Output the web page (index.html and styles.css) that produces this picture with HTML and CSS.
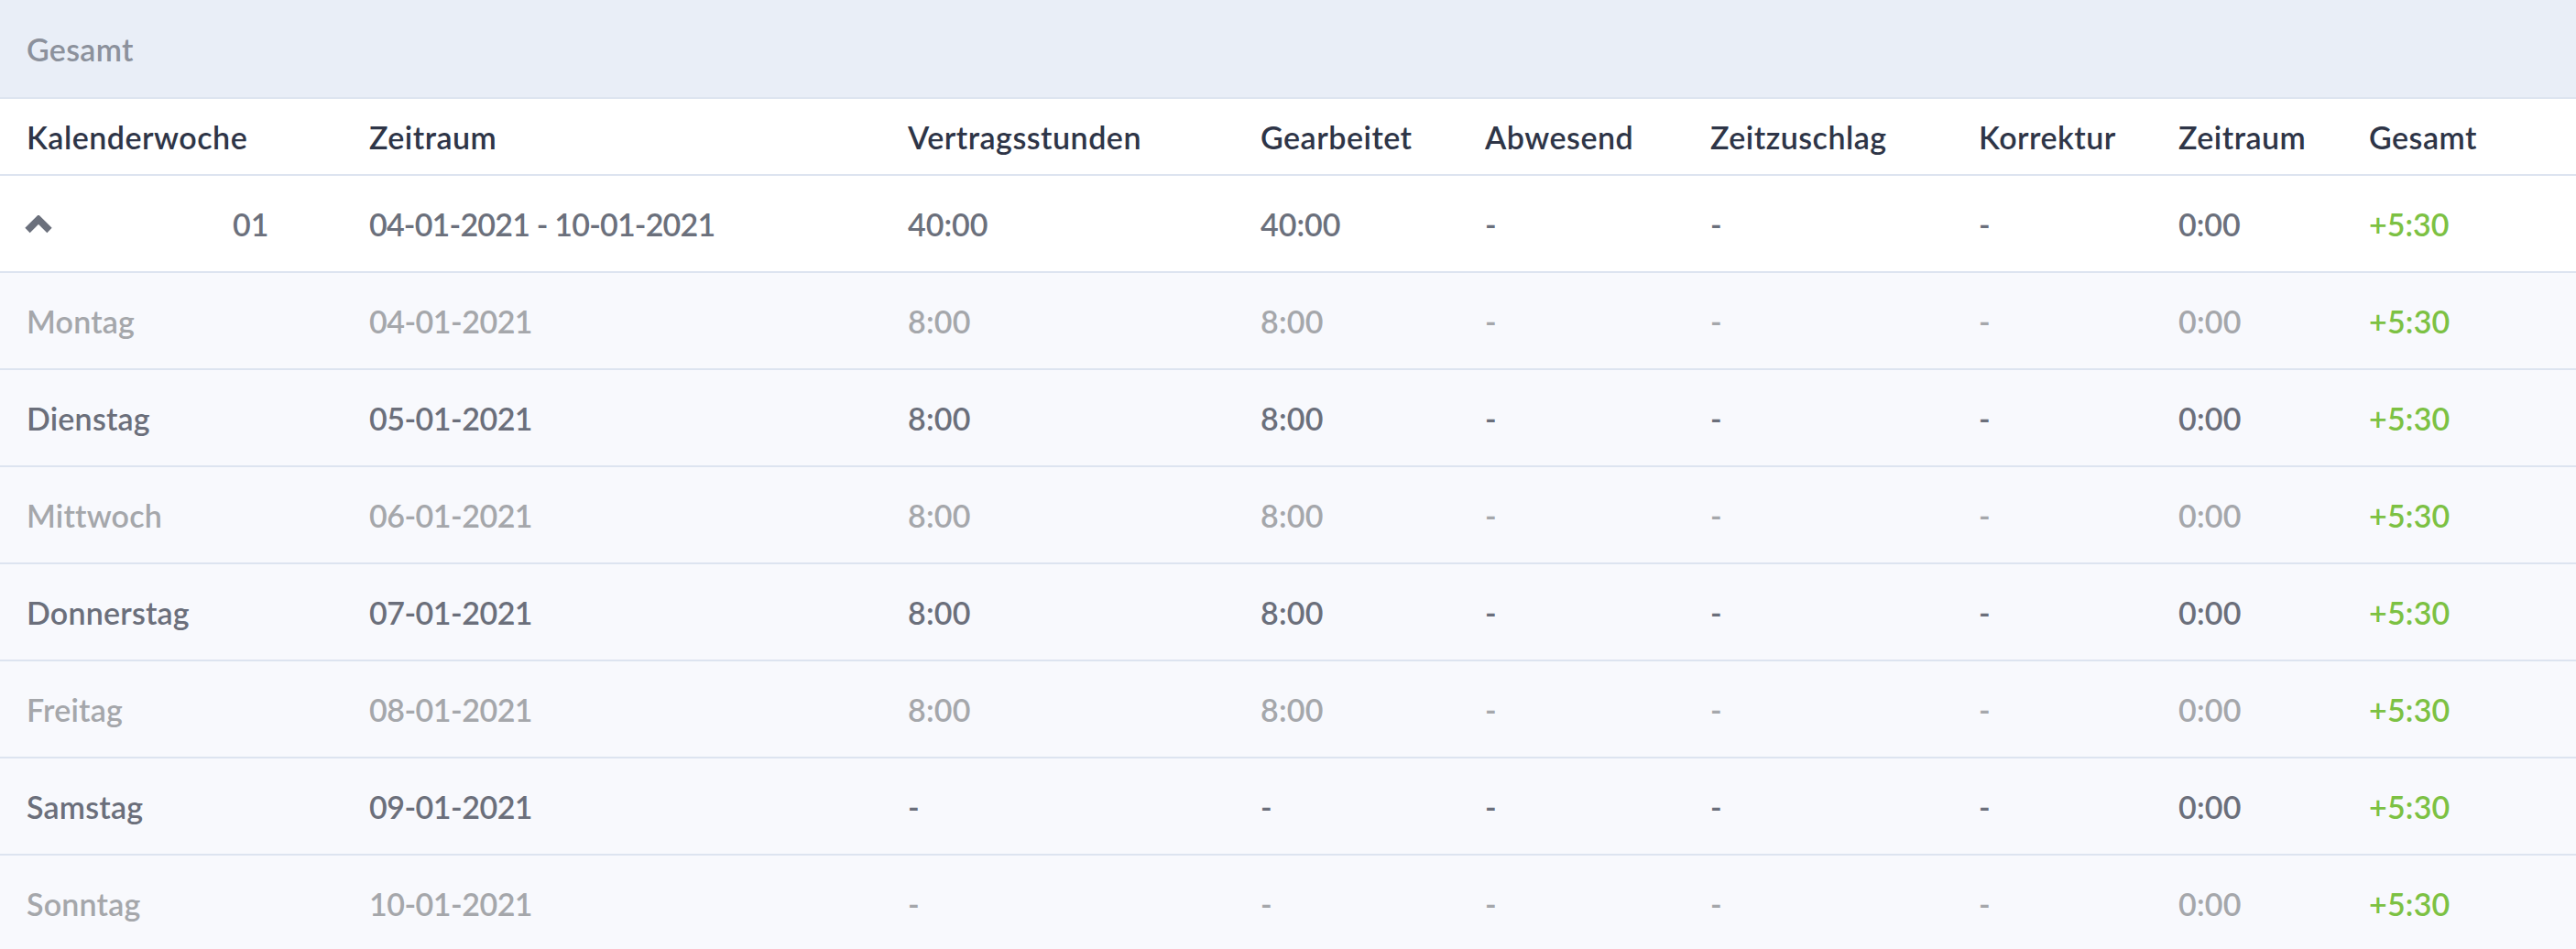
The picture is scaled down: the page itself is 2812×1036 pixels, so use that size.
FILE: index.html
```html
<!DOCTYPE html>
<html lang="de">
<head>
<meta charset="utf-8">
<title>Gesamt</title>
<link rel="stylesheet" href="styles.css">
</head>
<body>
<div class="panel">
  <div class="band">Gesamt</div>
  <div class="row head">
    <div>Kalenderwoche</div>
    <div>Zeitraum</div>
    <div>Vertragsstunden</div>
    <div>Gearbeitet</div>
    <div>Abwesend</div>
    <div>Zeitzuschlag</div>
    <div>Korrektur</div>
    <div>Zeitraum</div>
    <div>Gesamt</div>
  </div>
  <div class="row week">
    <div class="kw">
      <svg class="chev" width="30" height="20" viewBox="0 0 30 20"><polyline points="3,16.5 15,4.5 27,16.5" fill="none" stroke="#6b707c" stroke-width="7.5" stroke-linejoin="miter"/></svg>
      <span class="num">01</span>
    </div>
    <div class="date range">04-01-2021 - 10-01-2021</div>
    <div>40:00</div>
    <div>40:00</div>
    <div>-</div>
    <div>-</div>
    <div>-</div>
    <div>0:00</div>
    <div class="pos">+5:30</div>
  </div>
  <div class="row day light">
    <div>Montag</div><div class="date">04-01-2021</div><div>8:00</div><div>8:00</div><div>-</div><div>-</div><div>-</div><div>0:00</div><div class="pos">+5:30</div>
  </div>
  <div class="row day dark">
    <div>Dienstag</div><div class="date">05-01-2021</div><div>8:00</div><div>8:00</div><div>-</div><div>-</div><div>-</div><div>0:00</div><div class="pos">+5:30</div>
  </div>
  <div class="row day light">
    <div>Mittwoch</div><div class="date">06-01-2021</div><div>8:00</div><div>8:00</div><div>-</div><div>-</div><div>-</div><div>0:00</div><div class="pos">+5:30</div>
  </div>
  <div class="row day dark">
    <div>Donnerstag</div><div class="date">07-01-2021</div><div>8:00</div><div>8:00</div><div>-</div><div>-</div><div>-</div><div>0:00</div><div class="pos">+5:30</div>
  </div>
  <div class="row day light">
    <div>Freitag</div><div class="date">08-01-2021</div><div>8:00</div><div>8:00</div><div>-</div><div>-</div><div>-</div><div>0:00</div><div class="pos">+5:30</div>
  </div>
  <div class="row day dark">
    <div>Samstag</div><div class="date">09-01-2021</div><div>-</div><div>-</div><div>-</div><div>-</div><div>-</div><div>0:00</div><div class="pos">+5:30</div>
  </div>
  <div class="row day light">
    <div>Sonntag</div><div class="date">10-01-2021</div><div>-</div><div>-</div><div>-</div><div>-</div><div>-</div><div>0:00</div><div class="pos">+5:30</div>
  </div>
</div>
</body>
</html>
```

FILE: styles.css
```css
html, body {
  margin: 0;
  padding: 0;
  background: #ffffff;
}

body {
  font-family: "Lato", "Open Sans", "Liberation Sans", sans-serif;
  font-weight: 600;
  font-size: 34px;
  -webkit-font-smoothing: antialiased;
}

.panel {
  width: 2812px;
}

.band {
  height: 106px;
  background: #e9eef7;
  border-bottom: 2px solid #dde4f0;
  color: #8c919c;
  padding-left: 29px;
  display: flex;
  align-items: center;
  letter-spacing: 0.3px;
}

.row {
  display: grid;
  grid-template-columns: 374px 588px 385px 245px 246px 293px 218px 208px 1fr;
  padding-left: 29px;
  align-items: center;
  border-bottom: 2px solid #dde4f0;
  white-space: nowrap;
}

.head {
  height: 82px;
  color: #2e3547;
  background: #ffffff;
  letter-spacing: 0.5px;
}

.week {
  height: 104px;
  color: #6b707c;
  background: #ffffff;
}

.day {
  height: 104px;
  background: #f8f9fd;
  letter-spacing: 0.2px;
}

.day.light {
  color: #a5a7ab;
}

.day.dark {
  color: #6b6f7b;
}

.date {
  letter-spacing: -0.5px;
}

.date.range {
  letter-spacing: -0.8px;
}

.pos {
  color: #7cc143;
}

.kw {
  display: flex;
  align-items: center;
}

.chev {
  display: block;
  margin-left: -2px;
  margin-top: 2px;
}

.num {
  margin-left: 197px;
}
```
